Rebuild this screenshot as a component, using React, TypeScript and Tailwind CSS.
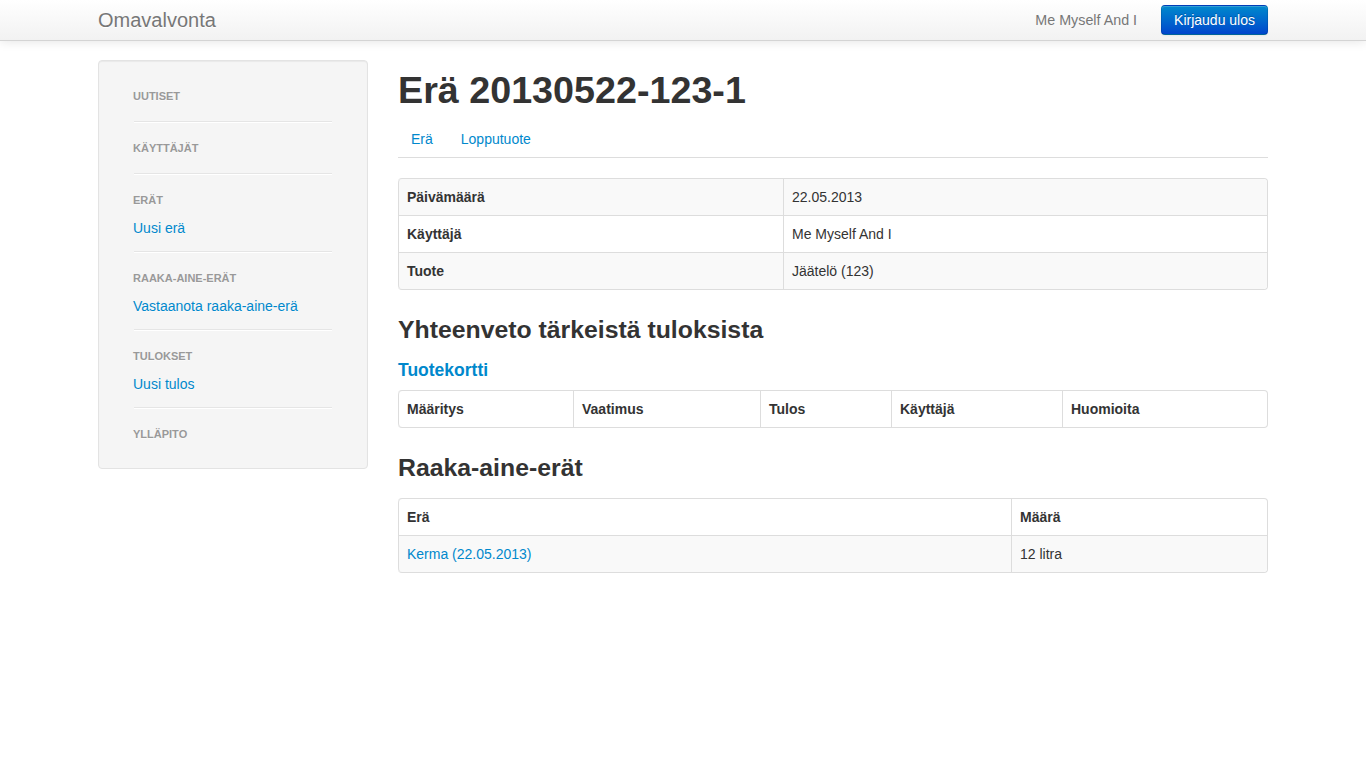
import React from "react";

const font = { fontFamily: '"Liberation Sans", Arial, Helvetica, sans-serif' };

function NavHeader({ children }: { children: React.ReactNode }) {
  return (
    <div className="py-[3px] text-[11px] leading-5 font-bold uppercase text-[#999] [text-shadow:0_1px_0_rgba(255,255,255,0.5)]">
      {children}
    </div>
  );
}

function NavLink({ children }: { children: React.ReactNode }) {
  return (
    <div className="mt-[2px] py-[3px] text-[14px] leading-5 text-[#0088cc] [text-shadow:0_1px_0_rgba(255,255,255,0.5)]">
      {children}
    </div>
  );
}

function Divider({ afterLink }: { afterLink?: boolean }) {
  return (
    <div
      className={
        "mx-px h-px bg-[#e5e5e5] border-b border-white box-content mb-[12px] " +
        (afterLink ? "mt-[10px]" : "mt-[12px]")
      }
    />
  );
}

export default function App() {
  const th = "p-2 text-left align-top font-bold leading-5 border-l border-[#ddd]";
  const td = "p-2 text-left align-top leading-5 border-l border-[#ddd]";
  return (
    <div className="min-h-[768px] bg-white text-[#333] text-[14px] leading-5" style={font}>
      {/* Navbar */}
      <div className="h-[41px] border-b border-[#d4d4d4] bg-gradient-to-b from-white to-[#f2f2f2] shadow-[0_1px_10px_rgba(0,0,0,0.1)]">
        <div className="mx-auto w-[1170px] h-10 flex items-center justify-between">
          <div className="text-[20px] leading-5 text-[#777] [text-shadow:0_1px_0_#fff]">Omavalvonta</div>
          <div className="flex items-center">
            <span className="text-[#777] leading-10 mr-[24px] text-[14.3px]">Me Myself And I</span>
            <button className="h-[30px] px-3 rounded-[4px] text-white text-[14px] leading-5 bg-gradient-to-b from-[#0088cc] to-[#0044cc] border border-[rgba(0,0,0,0.1)] border-b-[rgba(0,0,0,0.25)] [text-shadow:0_-1px_0_rgba(0,0,0,0.25)] shadow-[inset_0_1px_0_rgba(255,255,255,0.2),0_1px_2px_rgba(0,0,0,0.05)]">
              Kirjaudu ulos
            </button>
          </div>
        </div>
      </div>

      <div className="pt-[19px] mx-auto w-[1170px] flex gap-[30px] items-start">
        {/* Sidebar */}
        <div className="w-[270px] shrink-0 bg-[#f5f5f5] border border-[#e3e3e3] rounded-[4px] shadow-[inset_0_1px_1px_rgba(0,0,0,0.05)] px-[34px] pt-[22px] pb-[21px]">
          <NavHeader>Uutiset</NavHeader>
          <Divider />
          <NavHeader>Käyttäjät</NavHeader>
          <Divider />
          <NavHeader>Erät</NavHeader>
          <NavLink>Uusi erä</NavLink>
          <Divider afterLink />
          <NavHeader>Raaka-aine-erät</NavHeader>
          <NavLink>Vastaanota raaka-aine-erä</NavLink>
          <Divider afterLink />
          <NavHeader>Tulokset</NavHeader>
          <NavLink>Uusi tulos</NavLink>
          <Divider afterLink />
          <NavHeader>Ylläpito</NavHeader>
        </div>

        {/* Main */}
        <div className="w-[870px] shrink-0">
          <h1 className="mt-[10px] mb-[10px] text-[37.7px] leading-10 font-bold text-[#333]">Erä 20130522-123-1</h1>

          <div className="flex h-[37px] border-b border-[#ddd] mb-5 box-content">
            <div className="px-[13px] pt-[9px] text-[#0088cc] leading-5 mr-[2px]">Erä</div>
            <div className="px-[13px] pt-[9px] text-[#0088cc] leading-5">Lopputuote</div>
          </div>

          <table className="w-[870px] table-fixed border-separate border-spacing-0 border border-l-0 border-[#ddd] rounded-[4px]">
            <tbody>
              <tr className="bg-[#f9f9f9]">
                <th className={th + " w-[385px] rounded-tl-[4px]"}>Päivämäärä</th>
                <td className={td + " rounded-tr-[4px]"}>22.05.2013</td>
              </tr>
              <tr>
                <th className={th + " border-t"}>Käyttäjä</th>
                <td className={td + " border-t"}>Me Myself And I</td>
              </tr>
              <tr className="bg-[#f9f9f9]">
                <th className={th + " border-t rounded-bl-[4px]"}>Tuote</th>
                <td className={td + " border-t rounded-br-[4px]"}>Jäätelö (123)</td>
              </tr>
            </tbody>
          </table>

          <h3 className="mt-5 mb-[10px] text-[24.8px] leading-10 font-bold text-[#333]">Yhteenveto tärkeistä tuloksista</h3>
          <h4 className="mt-[10px] mb-[10px] text-[17.5px] leading-5 font-bold text-[#0088cc]">Tuotekortti</h4>

          <table className="w-[870px] table-fixed border-separate border-spacing-0 border border-l-0 border-[#ddd] rounded-[4px]">
            <thead>
              <tr>
                <th className={th + " w-[175px] rounded-tl-[4px] rounded-bl-[4px]"}>Määritys</th>
                <th className={th + " w-[187px]"}>Vaatimus</th>
                <th className={th + " w-[131px]"}>Tulos</th>
                <th className={th + " w-[171px]"}>Käyttäjä</th>
                <th className={th}>Huomioita</th>
              </tr>
            </thead>
          </table>

          <h3 className="mt-5 mb-[10px] text-[24.8px] leading-10 font-bold text-[#333]">Raaka-aine-erät</h3>

          <table className="w-[870px] table-fixed border-separate border-spacing-0 border border-l-0 border-[#ddd] rounded-[4px]">
            <thead>
              <tr>
                <th className={th + " w-[613px] rounded-tl-[4px]"}>Erä</th>
                <th className={th}>Määrä</th>
              </tr>
            </thead>
            <tbody>
              <tr className="bg-[#f9f9f9]">
                <td className={td + " border-t rounded-bl-[4px] text-[#0088cc]"}>Kerma (22.05.2013)</td>
                <td className={td + " border-t rounded-br-[4px]"}>12 litra</td>
              </tr>
            </tbody>
          </table>
        </div>
      </div>
    </div>
  );
}
